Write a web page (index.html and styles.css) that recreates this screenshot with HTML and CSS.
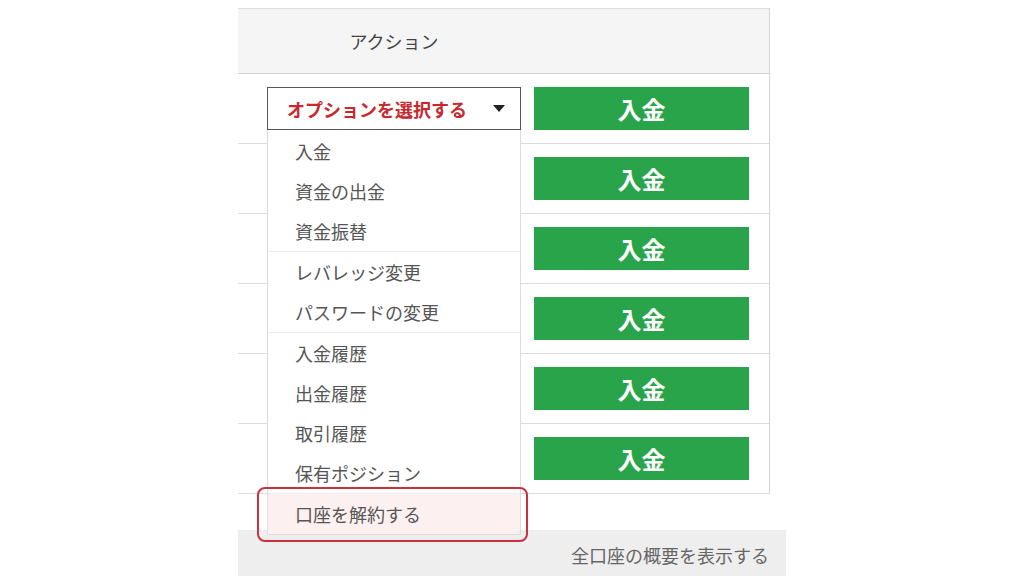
FILE: index.html
```html
<!DOCTYPE html>
<html lang="ja">
<head>
  <meta charset="UTF-8">
  <meta name="viewport" content="width=device-width, initial-scale=1.0">
  <title>口座一覧</title>
  <link rel="stylesheet" href="styles.css">
</head>
<body>
  <div class="panel">
    <div class="account-table">
      <div class="table-head">
        <div class="head-cell">アクション</div>
        <div class="head-cell"></div>
      </div>

      <div class="table-row">
        <div class="action-cell">
          <div class="select-box">
            <span class="select-label">オプションを選択する</span>
            <span class="select-arrow"></span>
          </div>
          <ul class="option-menu">
            <li>入金</li>
            <li>資金の出金</li>
            <li class="group-end">資金振替</li>
            <li>レバレッジ変更</li>
            <li class="group-end">パスワードの変更</li>
            <li>入金履歴</li>
            <li>出金履歴</li>
            <li>取引履歴</li>
            <li class="group-end">保有ポジション</li>
            <li class="danger">口座を解約する</li>
          </ul>
        </div>
        <button class="deposit-button">入金</button>
      </div>
      <div class="table-row">
        <div class="action-cell"></div>
        <button class="deposit-button">入金</button>
      </div>
      <div class="table-row">
        <div class="action-cell"></div>
        <button class="deposit-button">入金</button>
      </div>
      <div class="table-row">
        <div class="action-cell"></div>
        <button class="deposit-button">入金</button>
      </div>
      <div class="table-row">
        <div class="action-cell"></div>
        <button class="deposit-button">入金</button>
      </div>
      <div class="table-row">
        <div class="action-cell"></div>
        <button class="deposit-button">入金</button>
      </div>
    </div>

    <div class="summary-bar">
      <a class="summary-link">全口座の概要を表示する</a>
    </div>
  </div>
</body>
</html>
```

FILE: styles.css
```css
body {
  margin: 0;
  padding: 0;
  background-color: #fff;
  font-family: "Noto Sans CJK JP", "Noto Sans", sans-serif;
  color: #555;
}

.panel {
  width: 548px;
  margin-left: 238px;
  padding-top: 8px;
}

.account-table {
  width: 531px;
  border-top: 1px solid #dcdcdc;
  border-right: 1px solid #d4d4d4;
}

.table-head {
  display: flex;
  height: 64px;
  background-color: #f5f5f5;
  border-bottom: 1px solid #d4d4d4;
}

.head-cell {
  display: flex;
  align-items: center;
  justify-content: center;
  width: 254px;
  margin-left: 29px;
  font-size: 18px;
  color: #444;
}

.head-cell + .head-cell {
  margin-left: 13px;
  width: 215px;
}

.table-row {
  display: flex;
  align-items: center;
  gap: 13px;
  height: 69px;
  padding: 0 20px 0 29px;
  border-bottom: 1px solid #dcdcdc;
}

.action-cell {
  position: relative;
  width: 254px;
  height: 43px;
}

.select-box {
  display: flex;
  align-items: center;
  justify-content: space-between;
  box-sizing: border-box;
  height: 43px;
  padding: 0 15px 0 19px;
  border: 1px solid #555;
  background-color: #fff;
}

.select-label {
  font-size: 18px;
  font-weight: bold;
  color: #c8282e;
}

.select-arrow {
  width: 0;
  height: 0;
  border-left: 6px solid transparent;
  border-right: 6px solid transparent;
  border-top: 7px solid #222;
}

.option-menu {
  position: absolute;
  top: 43px;
  left: 0;
  z-index: 2;
  box-sizing: border-box;
  width: 254px;
  margin: 0;
  padding: 1px 0 0;
  list-style: none;
  background-color: #fff;
  border: 1px solid #dcdcdc;
  border-top: none;
}

.option-menu li {
  position: relative;
  height: 40px;
  line-height: 40px;
  padding-left: 27px;
  font-size: 18px;
  color: #555;
}

.option-menu li.group-end {
  border-bottom: 1px solid #ececec;
}

.option-menu li.danger {
  background-color: #fdf0f0;
}

.option-menu li.danger::after {
  content: "";
  position: absolute;
  top: -7px;
  left: -11px;
  right: -8px;
  bottom: -8px;
  border: 2px solid #c9313d;
  border-radius: 8px;
}

.deposit-button {
  width: 215px;
  height: 43px;
  border: none;
  background-color: #2aa44a;
  color: #fff;
  font-family: inherit;
  font-size: 24px;
  font-weight: bold;
  cursor: pointer;
}

.summary-bar {
  display: flex;
  justify-content: flex-end;
  align-items: center;
  height: 46px;
  margin-top: 36px;
  padding: 4px 17px 0 0;
  box-sizing: border-box;
  background-color: #eeeeee;
}

.summary-link {
  font-size: 18px;
  color: #666;
}
```
